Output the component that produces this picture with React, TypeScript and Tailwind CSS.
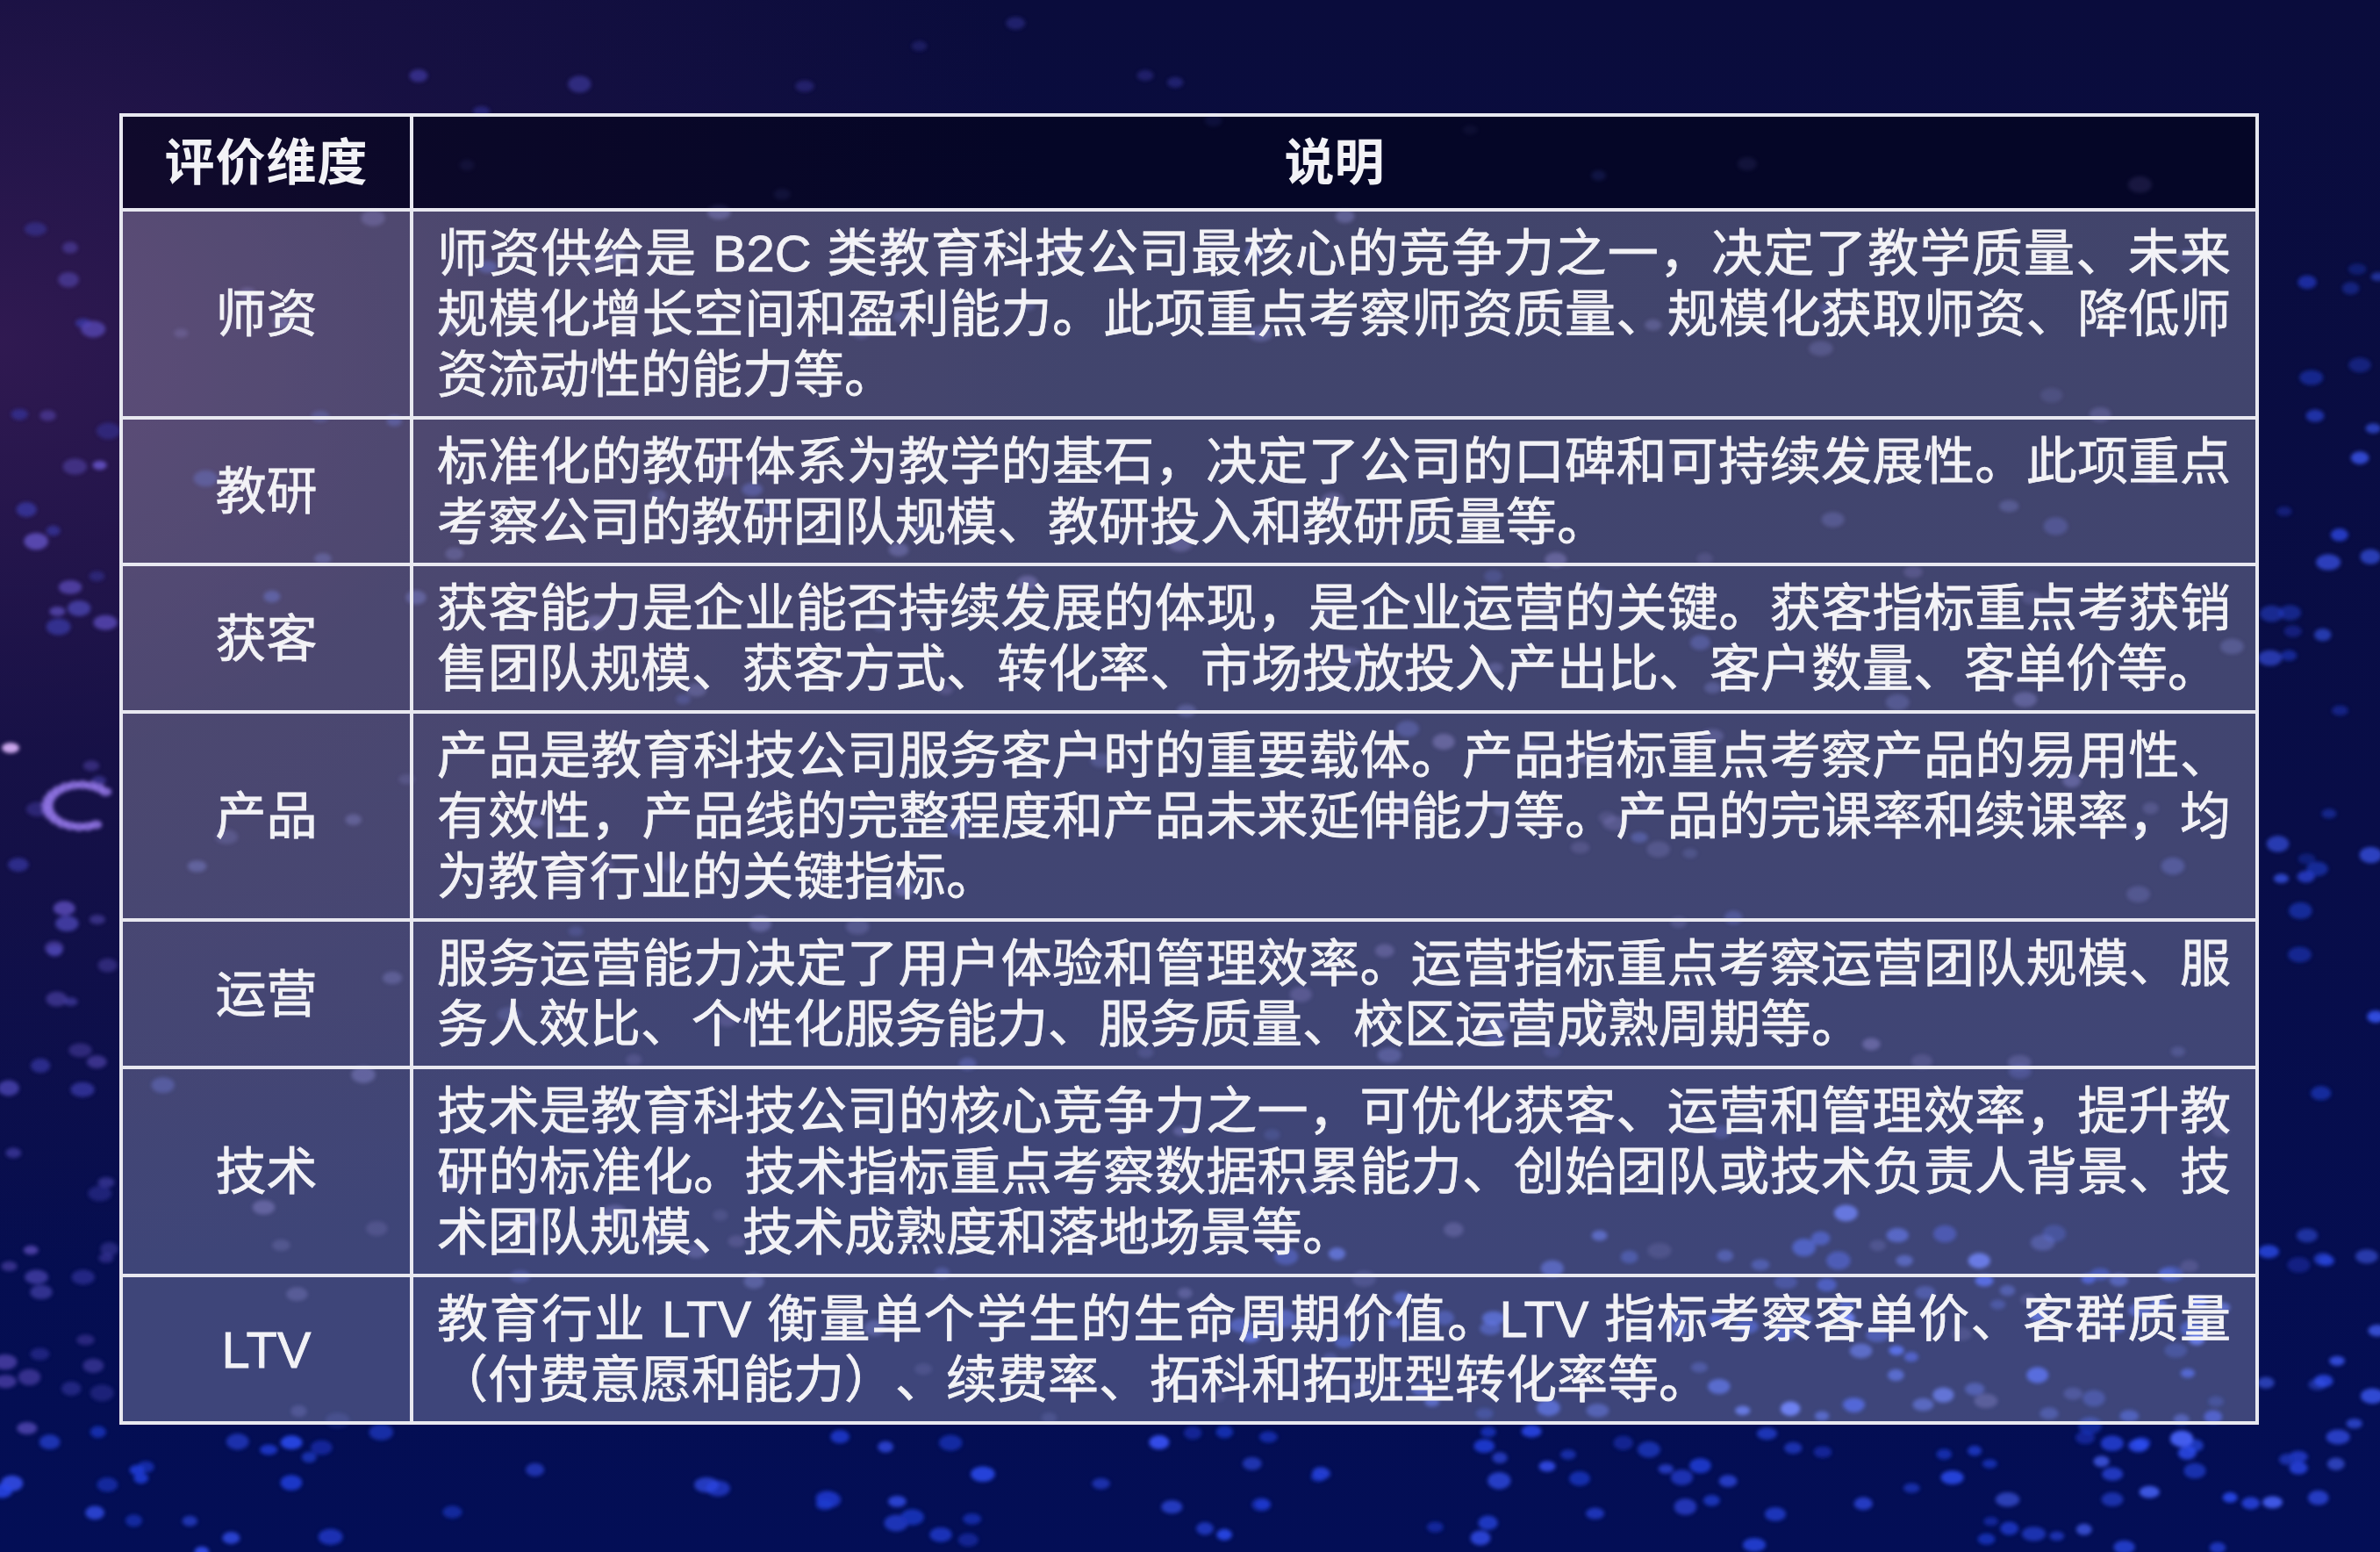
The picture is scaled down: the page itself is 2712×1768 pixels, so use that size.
import React from "react";

type Row = { name: string; h: string; lines: string[] };

const ROWS: Row[] = [
  {
    name: "师资",
    h: "h-[237px]",
    lines: [
      "师资供给是 B2C 类教育科技公司最核心的竞争力之一，决定了教学质量、未来",
      "规模化增长空间和盈利能力。此项重点考察师资质量、规模化获取师资、降低师",
      "资流动性的能力等。",
    ],
  },
  {
    name: "教研",
    h: "h-[167px]",
    lines: [
      "标准化的教研体系为教学的基石，决定了公司的口碑和可持续发展性。此项重点",
      "考察公司的教研团队规模、教研投入和教研质量等。",
    ],
  },
  {
    name: "获客",
    h: "h-[168px]",
    lines: [
      "获客能力是企业能否持续发展的体现，是企业运营的关键。获客指标重点考获销",
      "售团队规模、获客方式、转化率、市场投放投入产出比、客户数量、客单价等。",
    ],
  },
  {
    name: "产品",
    h: "h-[237px]",
    lines: [
      "产品是教育科技公司服务客户时的重要载体。产品指标重点考察产品的易用性、",
      "有效性，产品线的完整程度和产品未来延伸能力等。产品的完课率和续课率，均",
      "为教育行业的关键指标。",
    ],
  },
  {
    name: "运营",
    h: "h-[168px]",
    lines: [
      "服务运营能力决定了用户体验和管理效率。运营指标重点考察运营团队规模、服",
      "务人效比、个性化服务能力、服务质量、校区运营成熟周期等。",
    ],
  },
  {
    name: "技术",
    h: "h-[237px]",
    lines: [
      "技术是教育科技公司的核心竞争力之一，可优化获客、运营和管理效率，提升教",
      "研的标准化。技术指标重点考察数据积累能力、创始团队或技术负责人背景、技",
      "术团队规模、技术成熟度和落地场景等。",
    ],
  },
  {
    name: "LTV",
    h: "h-[168px]",
    lines: [
      "教育行业 LTV 衡量单个学生的生命周期价值。LTV 指标考察客单价、客群质量",
      "（付费意愿和能力）、续费率、拓科和拓班型转化率等。",
    ],
  },
];

// deterministic random so the dots stay put between renders
function rng(seed: number) {
  return () => {
    seed = (seed + 0x6d2b79f5) | 0;
    let t = Math.imul(seed ^ (seed >>> 15), 1 | seed);
    t = (t + Math.imul(t ^ (t >>> 7), 61 | t)) ^ t;
    return ((t ^ (t >>> 14)) >>> 0) / 4294967296;
  };
}

type Zone = { x0: number; x1: number; y0: number; y1: number; n: number; colors: string[]; op: [number, number] };

const ZONES: Zone[] = [
  { x0: 0, x1: 2712, y0: 1630, y1: 1768, n: 90, colors: ["#2a48e8", "#1f3bd0", "#3550f0", "#1a32b8"], op: [0.55, 0.95] },
  { x0: 1950, x1: 2712, y0: 1380, y1: 1768, n: 60, colors: ["#2f4ff5", "#2440d8", "#4a66ff"], op: [0.5, 0.9] },
  { x0: 2585, x1: 2712, y0: 300, y1: 1700, n: 40, colors: ["#2a44d8", "#1e36b8", "#3a56ee"], op: [0.4, 0.85] },
  { x0: 0, x1: 125, y0: 250, y1: 1650, n: 55, colors: ["#5a4ab8", "#6a58d0", "#4a44b0", "#3a3aa8"], op: [0.4, 0.85] },
  { x0: 140, x1: 2570, y0: 135, y1: 1620, n: 170, colors: ["#6a6ac8", "#5a62c8", "#7a70d0", "#4a5ad8"], op: [0.18, 0.45] },
  { x0: 1400, x1: 2570, y0: 1400, y1: 1620, n: 50, colors: ["#3a58f0", "#4a66ff", "#2e4ce0"], op: [0.3, 0.7] },
  { x0: 300, x1: 2000, y0: 20, y1: 128, n: 8, colors: ["#4a44b8", "#3a3aa8"], op: [0.3, 0.6] },
];

function makeDots() {
  const r = rng(11);
  const out: { x: number; y: number; rx: number; ry: number; c: string; o: number }[] = [];
  for (const z of ZONES) {
    for (let i = 0; i < z.n; i++) {
      const rx = 8 + r() * 6;
      out.push({
        x: z.x0 + r() * (z.x1 - z.x0),
        y: z.y0 + r() * (z.y1 - z.y0),
        rx,
        ry: rx * (0.6 + r() * 0.15),
        c: z.colors[Math.floor(r() * z.colors.length)],
        o: z.op[0] + r() * (z.op[1] - z.op[0]),
      });
    }
  }
  // small glowing ring at the left edge
  for (let i = 0; i < 18; i++) {
    const a = Math.PI * 0.35 + (i / 18) * Math.PI * 1.5;
    out.push({ x: 92 + Math.cos(a) * 38, y: 918 + Math.sin(a) * 24, rx: 7, ry: 5, c: "#9a7cf0", o: 0.8 });
  }
  out.push({ x: 12, y: 852, rx: 10, ry: 6, c: "#e0b8ff", o: 0.9 });
  return out;
}

const DOTS = makeDots();

function Backdrop() {
  return (
    <svg className="absolute inset-0" width="2712" height="1768" viewBox="0 0 2712 1768">
      <defs>
        <filter id="soft" x="-50%" y="-50%" width="200%" height="200%">
          <feGaussianBlur stdDeviation="2" />
        </filter>
      </defs>
      <g filter="url(#soft)">
        {DOTS.map((d, i) => (
          <ellipse key={i} cx={d.x} cy={d.y} rx={d.rx} ry={d.ry} fill={d.c} opacity={d.o} />
        ))}
      </g>
    </svg>
  );
}

export default function App() {
  return (
    <div className="relative w-[2712px] h-[1768px] overflow-hidden bg-[linear-gradient(180deg,#0a0c3c_0%,#080d48_55%,#030e56_100%)] font-['Liberation_Sans','Noto_Sans_CJK_SC',sans-serif] text-[#f2f2f6] [text-spacing-trim:space-all]">
      <div className="absolute inset-0 bg-[radial-gradient(ellipse_45%_60%_at_0%_22%,rgba(50,26,82,0.95)_0%,rgba(34,20,70,0.55)_45%,rgba(20,14,60,0)_100%)]" />
      <Backdrop />
      <div className="relative pt-[129px] pl-[136px]">
        <table className="table-fixed border-collapse w-[2438px]">
          <colgroup>
            <col className="w-[331px]" />
            <col />
          </colgroup>
          <thead>
            <tr>
              <th className="h-[108px] border-[4px] border-[#e8e8f0] bg-[rgba(2,2,20,0.55)] text-center align-middle text-[57px] font-bold leading-[69px] tracking-[1px]">
                评价维度
              </th>
              <th className="h-[108px] border-[4px] border-[#e8e8f0] bg-[rgba(2,2,20,0.55)] text-center align-middle text-[57px] font-bold leading-[69px]">
                说明
              </th>
            </tr>
          </thead>
          <tbody>
            {ROWS.map((row) => (
              <tr key={row.name}>
                <td className={`${row.h} border-[4px] border-[#e8e8f0] bg-white/[0.23] text-center align-middle text-[58px] leading-[69px] [-webkit-text-stroke:0.8px_#f2f2f6]`}>
                  {row.name}
                </td>
                <td className={`${row.h} border-[4px] border-[#e8e8f0] bg-white/[0.23] pl-[27px] pr-[28px] align-middle text-[58px] leading-[69px] [-webkit-text-stroke:0.8px_#f2f2f6]`}>
                  {row.lines.map((line, i) => (
                    <div
                      key={i}
                      className={i < row.lines.length - 1 ? "text-justify [text-align-last:justify]" : "text-left"}
                    >
                      {line}
                    </div>
                  ))}
                </td>
              </tr>
            ))}
          </tbody>
        </table>
      </div>
    </div>
  );
}
